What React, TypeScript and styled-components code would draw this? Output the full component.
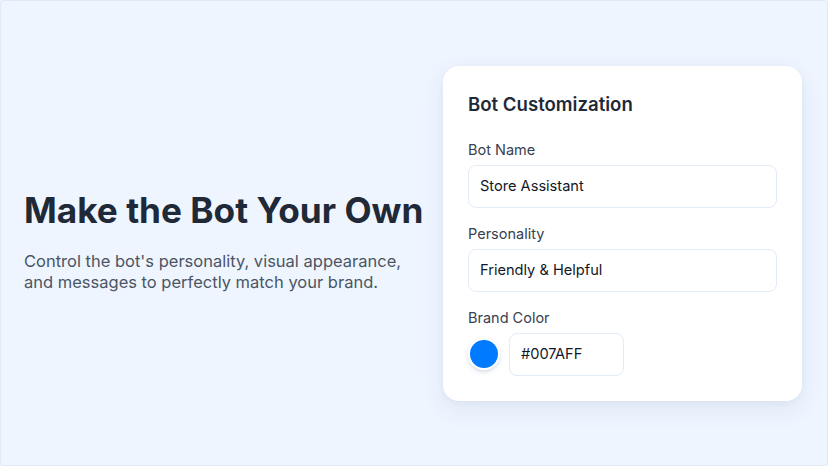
import styled, { createGlobalStyle } from "styled-components";

const GlobalStyle = createGlobalStyle`
  * { box-sizing: border-box; }
  html, body {
    margin: 0;
    padding: 0;
    width: 828px;
    height: 466px;
    overflow: hidden;
  }
  body {
    font-family: Inter, "Noto Sans", "Liberation Sans", sans-serif;
    background: #eef5ff;
  }
`;

const Page = styled.div`
  width: 828px;
  height: 466px;
  display: flex;
  align-items: center;
  justify-content: space-between;
  padding: 0 25px 0 23px;
  background: #eef5ff;
  border: 1px solid #e2eaf6;
  border-radius: 4px;
`;

const Intro = styled.div`
  display: flex;
  flex-direction: column;
  padding-top: 17px;
`;

const Heading = styled.h1`
  margin: 0 0 20px;
  font-size: 35.2px;
  line-height: 41px;
  font-weight: 700;
  color: #1f2937;
  white-space: nowrap;
`;

const Lead = styled.p`
  margin: 0;
  font-size: 16.5px;
  line-height: 21px;
  color: #4b5563;
`;

const Card = styled.div`
  width: 359px;
  flex-shrink: 0;
  background: #ffffff;
  border-radius: 16px;
  padding: 24px 24px 25px 25px;
  box-shadow: 0 8px 24px rgba(30, 64, 120, 0.08), 0 2px 6px rgba(30, 64, 120, 0.04);
  display: flex;
  flex-direction: column;
`;

const CardTitle = styled.h2`
  margin: 0 0 22px;
  font-size: 18.6px;
  line-height: 28px;
  font-weight: 600;
  color: #1f2937;
`;

const Field = styled.div`
  display: flex;
  flex-direction: column;
  gap: 5px;
  & + & {
    margin-top: 16px;
  }
`;

const Label = styled.label`
  font-size: 14.5px;
  line-height: 20px;
  font-weight: 400;
  color: #374151;
`;

const Input = styled.div<{ $width?: number }>`
  height: 43px;
  width: ${(p) => (p.$width ? `${p.$width}px` : "309px")};
  display: flex;
  align-items: center;
  padding: 0 11px;
  border: 1px solid #e3ebf9;
  border-radius: 8px;
  font-size: 14.6px;
  color: #111827;
  background: #ffffff;
`;

const ColorRow = styled.div`
  display: flex;
  align-items: center;
  gap: 9px;
`;

const Swatch = styled.div<{ $color: string }>`
  width: 32px;
  height: 32px;
  border-radius: 50%;
  background: ${(p) => p.$color};
  border: 2px solid #ffffff;
  box-shadow: 0 2px 4px rgba(30, 64, 120, 0.18);
`;

export default function App() {
  return (
    <>
      <GlobalStyle />
      <Page>
        <Intro>
          <Heading>Make the Bot Your Own</Heading>
          <Lead>
            Control the bot's personality, visual appearance,
            <br />
            and messages to perfectly match your brand.
          </Lead>
        </Intro>
        <Card>
          <CardTitle>Bot Customization</CardTitle>
          <Field>
            <Label>Bot Name</Label>
            <Input>Store Assistant</Input>
          </Field>
          <Field>
            <Label>Personality</Label>
            <Input>Friendly &amp; Helpful</Input>
          </Field>
          <Field>
            <Label>Brand Color</Label>
            <ColorRow>
              <Swatch $color="#007aff" />
              <Input $width={115}>#007AFF</Input>
            </ColorRow>
          </Field>
        </Card>
      </Page>
    </>
  );
}
